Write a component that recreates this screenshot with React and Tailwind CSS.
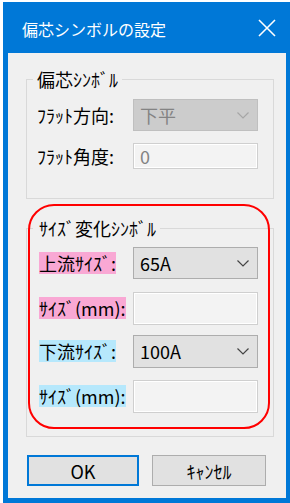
import React from 'react';

const Chevron = ({ color }) => (
  <svg width="12" height="7" viewBox="0 0 12 7" fill="none">
    <polyline points="0.5,0.5 6,6 11.5,0.5" stroke={color} strokeWidth="1.2" />
  </svg>
);

const Select = ({ value, disabled }) => (
  <div
    className={`w-[125px] h-full flex items-center justify-between pl-[6px] pr-[8px] border ${
      disabled ? 'bg-[#cccccc] border-[#bfbfbf] text-[#838383]' : 'bg-[#e1e1e1] border-[#adadad] text-black'
    }`}
  >
    <span>{value}</span>
    <Chevron color={disabled ? '#a6a6a6' : '#444444'} />
  </div>
);

const Field = ({ value }) => (
  <div className="w-[125px] h-full flex items-center pl-[6px] border border-[#cfcfcf] bg-[#f3f3f3] shadow-[inset_0_0_0_1px_#ffffff] text-[#838383]">
    {value}
  </div>
);

const Row = ({ label, hl, children, className }) => (
  <div className={`flex items-center ${className}`}>
    <div className="w-[96px] shrink-0">
      <span className={`inline-block leading-[22px] ${hl || ''}`}>{label}</span>
    </div>
    {children}
  </div>
);

export default function App() {
  return (
    <div className="w-[290px] h-[503px] bg-white pt-[2px] pl-[3px] font-['Noto_Sans_CJK_JP',sans-serif] text-[18px] text-black">
      <div className="w-[287px] h-[501px] bg-[#0078d7] flex flex-col">
        {/* Title bar */}
        <div className="h-[51px] flex items-center justify-between pl-[19px] pr-[14px] shrink-0">
          <span className="text-white text-[16px] leading-none pt-[2px]">偏芯シンボルの設定</span>
          <svg width="18" height="18" viewBox="0 0 18 18">
            <path d="M1 1 L17 17 M17 1 L1 17" stroke="#ffffff" strokeWidth="1.6" />
          </svg>
        </div>

        {/* Body */}
        <div className="relative flex-1 bg-[#f0f0f0] ml-[5px] mr-[4px] mb-[5px] pl-[18px]">
          <fieldset className="mt-[16px] w-[248px] border border-[#d9d9d9]">
            <legend className="ml-[6px] px-[4px] leading-[20px]">偏芯ｼﾝﾎﾞﾙ</legend>
            <div className="pl-[10px] pt-[10px] pb-[29px]">
              <Row label="ﾌﾗｯﾄ方向:" className="h-[32px]">
                <Select value="下平" disabled />
              </Row>
              <Row label="ﾌﾗｯﾄ角度:" className="h-[26px] mt-[12px]">
                <Field value="0" />
              </Row>
            </div>
          </fieldset>

          <fieldset className="mt-[19px] w-[248px] border border-[#d9d9d9]">
            <legend className="ml-[6px] pl-[6px] pr-[4px] leading-[20px]">ｻｲｽﾞ変化ｼﾝﾎﾞﾙ</legend>
            <div className="pl-[12px] pt-[9px] pb-[23px]">
              <Row label="上流ｻｲｽﾞ:" hl="bg-[#f9a8d4]" className="h-[32px] [&>div:first-child]:w-[94px]">
                <Select value="65A" />
              </Row>
              <Row label="ｻｲｽﾞ(mm):" hl="bg-[#f9a8d4]" className="h-[33px] mt-[13px] [&>div:first-child]:w-[94px]">
                <Field />
              </Row>
              <Row label="下流ｻｲｽﾞ:" hl="bg-[#b6e8fc]" className="h-[33px] mt-[10px] [&>div:first-child]:w-[94px]">
                <Select value="100A" />
              </Row>
              <Row label="ｻｲｽﾞ(mm):" hl="bg-[#b6e8fc]" className="h-[33px] mt-[12px] [&>div:first-child]:w-[94px]">
                <Field />
              </Row>
            </div>
          </fieldset>

          <div className="mt-[18px] ml-[1px] flex gap-[13px]">
            <button className="w-[112px] h-[31px] bg-[#e1e1e1] border-2 border-[#0078d7] leading-none">OK</button>
            <button className="w-[114px] h-[31px] bg-[#e1e1e1] border border-[#adadad] leading-none">ｷｬﾝｾﾙ</button>
          </div>

          {/* red annotation */}
          <div className="absolute left-[20px] top-[151px] w-[242px] h-[225px] rounded-[26px] border-2 border-[#ff0000] pointer-events-none" />
        </div>
      </div>
    </div>
  );
}
